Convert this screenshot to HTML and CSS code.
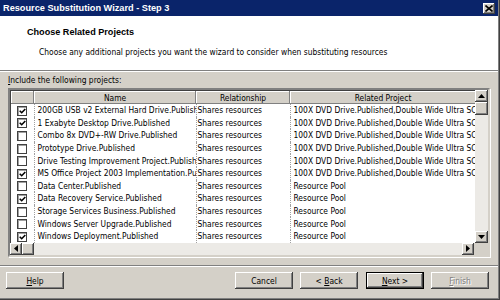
FILE: index.html
```html
<!DOCTYPE html>
<html lang="en">
  <head>
    <meta charset="UTF-8" />
    <title>Resource Substitution Wizard - Step 3</title>
    <link rel="stylesheet" href="styles.css">
  </head>
  <body>
    <div class="dialog">
      <div class="titlebar">
        <span class="title">Resource Substitution Wizard - Step 3</span>
        <span class="close">
          <svg width="8" height="7" viewBox="0 0 8 7"><path d="M0.5 0.5 L7.5 6.5 M7.5 0.5 L0.5 6.5" stroke="#000" stroke-width="1.6" /></svg>
        </span>
      </div>

      <div class="header">
        <h1>Choose Related Projects</h1>
        <p>Choose any additional projects you want the wizard to consider when substituting resources</p>
      </div>

      <div class="content">
        <div class="label"><u>I</u>nclude the following projects:</div>
        <div class="grid">
          <div class="grid-main">
            <table class="projects">
              <colgroup>
                <col class="c-check" />
                <col class="c-name" />
                <col class="c-rel" />
                <col class="c-proj" />
              </colgroup>
              <thead>
                <tr>
                  <th></th>
                  <th>Name</th>
                  <th>Relationship</th>
                  <th>Related Project</th>
                </tr>
              </thead>
              <tbody id="rows"></tbody>
            </table>
            <div class="vscroll">
              <span class="sbtn"><svg width="7" height="4" viewBox="0 0 7 4"><path d="M3.5 0 L7 4 L0 4 Z" fill="#000" /></svg></span>
              <span class="sthumb"></span>
              <span class="strack"></span>
              <span class="sbtn"><svg width="7" height="4" viewBox="0 0 7 4"><path d="M0 0 L7 0 L3.5 4 Z" fill="#000" /></svg></span>
            </div>
          </div>
          <div class="hscroll">
            <span class="sbtn"><svg width="4" height="7" viewBox="0 0 4 7"><path d="M0 3.5 L4 0 L4 7 Z" fill="#000" /></svg></span>
            <span class="sthumb"></span>
            <span class="strack"></span>
            <span class="sbtn"><svg width="4" height="7" viewBox="0 0 4 7"><path d="M0 0 L4 3.5 L0 7 Z" fill="#000" /></svg></span>
            <span class="corner"></span>
          </div>
        </div>
      </div>

      <div class="footer">
        <button class="btn"><u>H</u>elp</button>
        <span class="spacer"></span>
        <button class="btn">Cancel</button>
        <button class="btn">&lt; <u>B</u>ack</button>
        <button class="btn default"><u>N</u>ext &gt;</button>
        <button class="btn disabled"><u>F</u>inish</button>
      </div>
    </div>

    <script>
      const dvd = "100X DVD Drive.Published,Double Wide Ultra SCSI Drive.Published";
      const projects = [
        ["200GB USB v2 External Hard Drive.Published", true, dvd],
        ["1 Exabyte Desktop Drive.Published", true, dvd],
        ["Combo 8x DVD+-RW Drive.Published", false, dvd],
        ["Prototype Drive.Published", false, dvd],
        ["Drive Testing Improvement Project.Published", false, dvd],
        ["MS Office Project 2003 Implementation.Published", true, dvd],
        ["Data Center.Published", false, "Resource Pool"],
        ["Data Recovery Service.Published", true, "Resource Pool"],
        ["Storage Services Business.Published", false, "Resource Pool"],
        ["Windows Server Upgrade.Published", false, "Resource Pool"],
        ["Windows Deployment.Published", true, "Resource Pool"]
      ];

      const tick =
        '<svg width="7" height="6" viewBox="0 0 7 6"><path d="M0.7 2.7 L2.7 4.7 L6.3 1" fill="none" stroke="#000" stroke-width="1.6" /></svg>';

      const rows = document.getElementById("rows");
      projects.forEach(([name, checked, related]) => {
        const tr = document.createElement("tr");
        tr.innerHTML =
          `<td class="check"><span class="box">${checked ? tick : ""}</span></td>` +
          `<td>${name}</td>` +
          `<td>Shares resources</td>` +
          `<td>${related}</td>`;
        rows.appendChild(tr);
      });
    </script>
  </body>
</html>
```

FILE: styles.css
```css
* {
  margin: 0;
  padding: 0;
  box-sizing: border-box;
}
body {
  width: 500px;
  height: 300px;
  overflow: hidden;
  background: #d4d0c8;
  font-family: "DejaVu Sans Condensed", Tahoma, sans-serif;
  font-size: 8.4px;
  color: #000;
}
.dialog {
  width: 500px;
  height: 300px;
  display: flex;
  flex-direction: column;
  box-shadow: inset -1px -1px #404040, inset -2px -2px #808080;
}
.titlebar {
  height: 16px;
  margin-right: 2px;
  background: #0a246a;
  color: #fff;
  display: flex;
  align-items: center;
  justify-content: space-between;
  padding: 0 3px 0 3px;
}
.title {
  font-family: "Liberation Sans", Arial, sans-serif;
  font-size: 9.2px;
  font-weight: bold;
  line-height: 16px;
}
.close {
  width: 12px;
  height: 11px;
  background: #d4d0c8;
  display: flex;
  align-items: center;
  justify-content: center;
  box-shadow: inset -1px -1px #404040, inset 1px 1px #fff, inset -2px -2px #808080;
}
.header {
  height: 56px;
  margin-right: 2px;
  background: #fff;
  border-bottom: 1px solid #fff;
  box-shadow: inset 0 -1px #808080;
  padding-top: 10px;
}
.header h1 {
  font-family: "Liberation Sans", Arial, sans-serif;
  font-size: 9.1px;
  font-weight: bold;
  line-height: 13px;
  padding-left: 27px;
}
.header p {
  line-height: 13px;
  margin-top: 7px;
  padding-left: 39px;
}
.content {
  padding: 2px 10px 0 8px;
}
.label {
  line-height: 13px;
}
.grid {
  margin-top: 1px;
  width: 482px;
  border: 2px solid;
  border-color: #808080 #d4d0c8 #d4d0c8 #808080;
  box-shadow: 1px 1px #fff, inset 1px 1px #404040;
  background: #fff;
}
.grid-main {
  display: flex;
}
.projects {
  width: 465px;
  table-layout: fixed;
  border-collapse: collapse;
  margin-top: 1px;
  margin-left: 1px;
}
.c-check {
  width: 23px;
}
.c-name {
  width: 162px;
}
.c-rel {
  width: 94px;
}
.c-proj {
  width: 186px;
}
.projects th {
  height: 13px;
  font-weight: normal;
  background: #d4d0c8;
  box-shadow: inset -1px -1px #808080, inset 1px 1px #fff;
  text-align: center;
  line-height: 12px;
  white-space: nowrap;
  overflow: hidden;
}
.projects td {
  height: 12.6px;
  line-height: 12px;
  white-space: nowrap;
  overflow: hidden;
  padding-left: 3px;
  border-left: 1px dotted #a0a0a0;
}
.projects td:first-child {
  border-left: none;
  padding-left: 0;
}
.projects td:nth-child(3) {
  padding-left: 1px;
}
.check {
  text-align: center;
}
.box {
  display: inline-flex;
  align-items: center;
  justify-content: center;
  width: 10px;
  height: 10px;
  vertical-align: middle;
  background: #fff;
  border: 1px solid #404040;
  box-shadow: inset 1px 1px #a0a0a0;
}
.vscroll {
  width: 13px;
  display: flex;
  flex-direction: column;
  margin-left: -1px;
}
.hscroll {
  height: 12px;
  display: flex;
}
.sbtn,
.sthumb {
  flex: none;
  width: 12px;
  height: 12px;
  background: #d4d0c8;
  display: flex;
  align-items: center;
  justify-content: center;
  box-shadow: inset -1px -1px #404040, inset 1px 1px #fff, inset -2px -2px #808080;
}
.vscroll .sbtn,
.vscroll .sthumb {
  width: 13px;
}
.vscroll .sthumb {
  height: 13px;
}
.strack {
  flex: 1;
  background: #eceae6;
}
.corner {
  width: 14px;
  background: #d4d0c8;
}
.footer {
  margin-top: auto;
  height: 35px;
  margin-right: 2px;
  border-top: 1px solid #808080;
  box-shadow: inset 0 1px #fff;
  display: flex;
  align-items: flex-start;
  padding: 6px 9px 0 6px;
  gap: 7px;
}
.spacer {
  flex: 1;
}
.btn {
  width: 58px;
  height: 17px;
  font-family: inherit;
  font-size: 8.4px;
  color: #000;
  background: #d4d0c8;
  border: none;
  box-shadow: inset -1px -1px #404040, inset 1px 1px #fff, inset -2px -2px #808080;
}
.btn:nth-child(4) {
  margin-right: 1px;
}
.btn.default {
  box-shadow: inset 0 0 0 1px #000, inset -2px -2px #404040, inset 2px 2px #fff, inset -3px -3px #808080;
}
.btn.disabled {
  color: #808080;
  text-shadow: 1px 1px #fff;
}
```
